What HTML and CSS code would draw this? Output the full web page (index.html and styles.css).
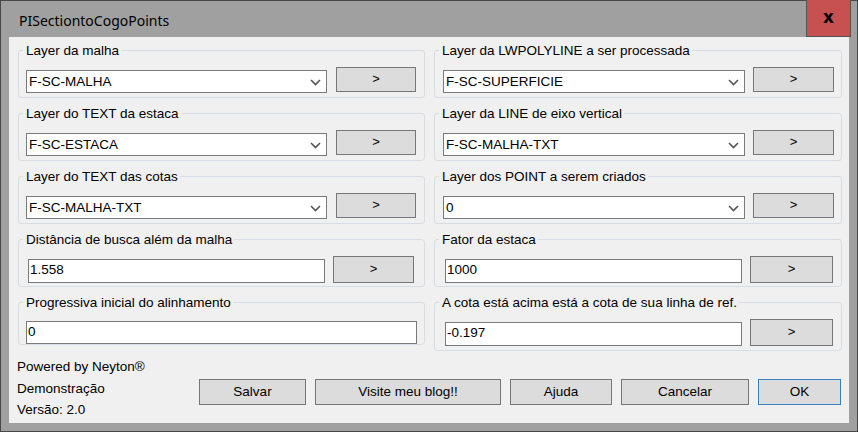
FILE: index.html
```html
<!DOCTYPE html>
<html>
<head>
<meta charset="utf-8">
<link rel="stylesheet" href="styles.css">
</head>
<body>
<div class="window">
  <div class="titlebar">
    <span class="title">PISectiontoCogoPoints</span>
    <div class="close">x</div>
  </div>
  <div class="content">
    <div class="groups">
      <div class="col col-left">
        <fieldset class="grp">
          <legend>Layer da malha</legend>
          <div class="row">
            <div class="combo"><span>F-SC-MALHA</span><svg width="11" height="7" viewBox="0 0 11 7"><polyline points="1,1 5.5,5.5 10,1" fill="none" stroke="#555" stroke-width="1.6"/></svg></div>
            <button class="pick">&gt;</button>
          </div>
        </fieldset>
        <fieldset class="grp">
          <legend>Layer do TEXT da estaca</legend>
          <div class="row">
            <div class="combo"><span>F-SC-ESTACA</span><svg width="11" height="7" viewBox="0 0 11 7"><polyline points="1,1 5.5,5.5 10,1" fill="none" stroke="#555" stroke-width="1.6"/></svg></div>
            <button class="pick">&gt;</button>
          </div>
        </fieldset>
        <fieldset class="grp">
          <legend>Layer do TEXT das cotas</legend>
          <div class="row">
            <div class="combo"><span>F-SC-MALHA-TXT</span><svg width="11" height="7" viewBox="0 0 11 7"><polyline points="1,1 5.5,5.5 10,1" fill="none" stroke="#555" stroke-width="1.6"/></svg></div>
            <button class="pick">&gt;</button>
          </div>
        </fieldset>
        <fieldset class="grp">
          <legend>Distância de busca além da malha</legend>
          <div class="row row-text">
            <div class="textbox">1.558</div>
            <button class="pick pick-text">&gt;</button>
          </div>
        </fieldset>
        <fieldset class="grp grp-short">
          <legend>Progressiva inicial do alinhamento</legend>
          <div class="row row-text">
            <div class="textbox textbox-wide">0</div>
          </div>
        </fieldset>
      </div>
      <div class="col col-right">
        <fieldset class="grp">
          <legend>Layer da LWPOLYLINE a ser processada</legend>
          <div class="row">
            <div class="combo"><span>F-SC-SUPERFICIE</span><svg width="11" height="7" viewBox="0 0 11 7"><polyline points="1,1 5.5,5.5 10,1" fill="none" stroke="#555" stroke-width="1.6"/></svg></div>
            <button class="pick">&gt;</button>
          </div>
        </fieldset>
        <fieldset class="grp">
          <legend>Layer da LINE de eixo vertical</legend>
          <div class="row">
            <div class="combo"><span>F-SC-MALHA-TXT</span><svg width="11" height="7" viewBox="0 0 11 7"><polyline points="1,1 5.5,5.5 10,1" fill="none" stroke="#555" stroke-width="1.6"/></svg></div>
            <button class="pick">&gt;</button>
          </div>
        </fieldset>
        <fieldset class="grp">
          <legend>Layer dos POINT a serem criados</legend>
          <div class="row">
            <div class="combo"><span>0</span><svg width="11" height="7" viewBox="0 0 11 7"><polyline points="1,1 5.5,5.5 10,1" fill="none" stroke="#555" stroke-width="1.6"/></svg></div>
            <button class="pick">&gt;</button>
          </div>
        </fieldset>
        <fieldset class="grp">
          <legend>Fator da estaca</legend>
          <div class="row row-text">
            <div class="textbox">1000</div>
            <button class="pick pick-text">&gt;</button>
          </div>
        </fieldset>
        <fieldset class="grp grp-last">
          <legend>A cota está acima está a cota de sua linha de ref.</legend>
          <div class="row row-text">
            <div class="textbox">-0.197</div>
            <button class="pick pick-text">&gt;</button>
          </div>
        </fieldset>
      </div>
    </div>
    <div class="footer">
      <div class="info">
        <div>Powered by Neyton®</div>
        <div>Demonstração</div>
        <div>Versão: 2.0</div>
      </div>
      <div class="actions">
        <button class="btn btn-salvar">Salvar</button>
        <button class="btn btn-blog">Visite meu blog!!</button>
        <button class="btn btn-ajuda">Ajuda</button>
        <button class="btn btn-cancelar">Cancelar</button>
        <button class="btn btn-ok">OK</button>
      </div>
    </div>
  </div>
</div>
</body>
</html>
```
FILE: styles.css
```css
* { box-sizing: border-box; }
html, body { margin: 0; padding: 0; }
body {
  font-family: "Liberation Sans", Arial, sans-serif;
  font-size: 13.5px;
  color: #000;
}
.window {
  width: 858px;
  height: 432px;
  border: 1px solid #474747;
  background: #a0a0a0;
  padding: 0 8px 8px 8px;
  display: flex;
  flex-direction: column;
}
.titlebar {
  height: 36px;
  margin: 0 -8px;
  display: flex;
  align-items: center;
  justify-content: space-between;
  padding-left: 18px;
}
.title {
  font-family: "Noto Sans", "Open Sans", sans-serif;
  font-size: 14px;
  color: #000;
  margin-top: 2px;
}
.close {
  width: 45px;
  height: 37px;
  margin-top: -1px;
  margin-right: 6px;
  align-self: flex-start;
  background: #c75050;
  border: 1px solid #555;
  border-top: none;
  display: flex;
  align-items: center;
  justify-content: center;
  font-family: "DejaVu Sans", sans-serif;
  font-weight: bold;
  font-size: 17px;
  padding-bottom: 3px;
}
.content {
  flex: 1;
  background: #f0f0f0;
  display: flex;
  flex-direction: column;
}
.groups {
  display: grid;
  grid-template-columns: 407px 408px;
  column-gap: 9px;
  padding: 6px 7px 0 9px;
  align-items: start;
}
.col {
  display: flex;
  flex-direction: column;
  gap: 8px;
}
.grp {
  margin: 0;
  padding: 0;
  min-width: 0;
  height: 55px;
  border: 1px solid #d7dde2;
  border-radius: 3px;
}
.grp-short { height: 50px; }
.grp-last { height: 56px; }
.grp legend {
  line-height: 15px;
  margin-left: 4px;
  padding: 0 2px 0 3px;
}
.row {
  display: flex;
  align-items: flex-start;
  margin-top: 9px;
  padding-left: 7px;
  gap: 9px;
}
.col-right .row { padding-left: 8px; gap: 8px; }
.combo {
  width: 301px;
  height: 23px;
  margin-top: 3px;
  background: #fff;
  border: 1px solid #7a7a7a;
  display: flex;
  align-items: center;
  justify-content: space-between;
  padding: 0 5px 0 2px;
}
.col-right .combo { width: 302px; }
.combo span { line-height: 15px; }
.combo svg { display: block; margin-top: 1px; }
.pick {
  width: 80px;
  height: 25px;
  margin: 0;
  padding: 0;
  background: #dcdcdc;
  border: 1px solid #777;
  border-radius: 0;
  font-family: "Liberation Sans", Arial, sans-serif;
  font-size: 13px;
  color: #000;
  padding-bottom: 2px;
}
.col-right .pick { width: 81px; }
.row-text { padding-left: 9px; gap: 8px; }
.col-right .row-text { padding-left: 10px; gap: 8px; }
.textbox {
  width: 297px;
  height: 24px;
  margin-top: 3px;
  background: #fff;
  border: 1px solid #7a7a7a;
  padding: 0 0 0 1px;
  line-height: 20px;
}
.grp-short .row-text { padding-left: 7px; }
.grp-short .textbox { margin-top: 2px; height: 23px; }
.textbox-wide { width: 391px; }
.pick-text { width: 81px; height: 27px; }
.col-right .pick-text { width: 83px; }
.footer {
  display: flex;
  align-items: flex-start;
  padding: 5px 0 0 8px;
}
.info {
  width: 182px;
  line-height: 21.5px;
}
.actions {
  display: flex;
  gap: 9px;
  margin-top: 23px;
}
.btn {
  height: 26px;
  margin: 0;
  padding: 0 0 1px 0;
  background: #dcdcdc;
  border: 1px solid #777;
  border-radius: 0;
  font-family: "Liberation Sans", Arial, sans-serif;
  font-size: 13.5px;
  color: #000;
}
.btn-salvar { width: 107px; }
.btn-blog { width: 186px; }
.btn-ajuda { width: 102px; }
.btn-cancelar { width: 128px; }
.btn-ok { width: 83px; border-color: #3a7fc1; }
```
